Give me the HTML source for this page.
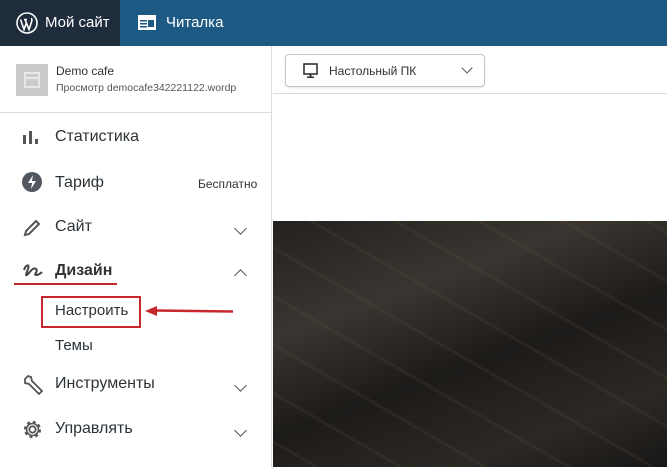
<!DOCTYPE html><html><head><meta charset="utf-8"><style>
*{margin:0;padding:0;box-sizing:border-box}
body{width:667px;height:467px;overflow:hidden;background:#fff;font-family:"Liberation Sans","DejaVu Sans",sans-serif;position:relative;color:#2c3338}
.top{position:absolute;left:0;top:0;width:667px;height:46px;background:#1d5a83}
.my{position:absolute;left:0;top:0;width:120px;height:46px;background:#1f2c3b;color:#fff;font-size:15px}
.t{position:absolute;color:#fff;font-size:15px;top:14px}
.side{position:absolute;left:0;top:46px;width:272px;height:421px;border-right:1px solid #dcdcde}
.item{position:absolute;left:55px;font-size:16px;color:#2c3338}
.ic{position:absolute;left:22px}
.chev{position:absolute;left:236px;width:9px;height:9px;border-right:1.6px solid #555;border-bottom:1.6px solid #555;transform:rotate(45deg)}
.wood{position:absolute;left:273px;top:221px;width:394px;height:246px;background:
repeating-linear-gradient(30deg,rgba(0,0,0,0) 0 20px,rgba(110,95,80,.14) 21px 23px,rgba(0,0,0,0) 24px 42px),
linear-gradient(160deg,#24211e 0%,#3a3530 30%,#1d1b19 55%,#2c2824 80%,#181716 100%)}
</style></head><body>
<div class="top"></div>
<div class="my"><svg style="position:absolute;left:16px;top:12px" width="22" height="22" viewBox="0 0 22 22"><circle cx="11" cy="11" r="10" fill="none" stroke="#fff" stroke-width="1.6"/><path d="M4.5 7.5l3.5 10 2.5-7M9 7.5l4 10 2.5-7.5c.8-2.5.3-3.5-.5-3.5M8 7.5h3" fill="none" stroke="#fff" stroke-width="1.6"/></svg><span class="t" style="left:45px">Мой сайт</span></div>
<svg style="position:absolute;left:138px;top:15px" width="18" height="15"><rect width="18" height="15" fill="#fff"/><rect x="2" y="5" width="7" height="1.5" fill="#1d5a83"/><rect x="2" y="8" width="7" height="1.5" fill="#1d5a83"/><rect x="2" y="11" width="7" height="1.5" fill="#1d5a83"/><rect x="10" y="5" width="6" height="7" fill="#1d5a83"/></svg>
<span class="t" style="left:166px">Читалка</span>
<div class="side">
<div style="position:absolute;left:16px;top:18px;width:32px;height:32px;background:#c9cbcd"><div style="position:absolute;left:8px;top:8px;width:16px;height:16px;border:2px solid #e6e7e8"></div><div style="position:absolute;left:8px;top:13px;width:16px;height:2px;background:#e6e7e8"></div></div>
<div style="position:absolute;left:56px;top:18px;font-size:12px">Demo cafe</div>
<div style="position:absolute;left:56px;top:36px;font-size:10.5px;color:#50575e;white-space:nowrap;width:190px;overflow:hidden">Просмотр democafe342221122.wordp</div>
<div style="position:absolute;left:0;top:66px;width:271px;height:1px;background:#dcdcde"></div>
</div>
<div style="position:absolute;left:0;top:0">
<svg class="ic" style="top:129px" width="16" height="16"><rect x="1" y="6" width="3" height="9" fill="#555"/><rect x="7" y="2" width="3" height="13" fill="#555"/><rect x="13" y="10" width="3" height="5" fill="#555"/></svg>
<span class="item" style="top:128px">Статистика</span>
<svg class="ic" style="top:172px" width="20" height="20"><circle cx="10" cy="10" r="10" fill="#50575e"/><path d="M11 3L6 11h4l-1 6 5-8h-4z" fill="#fff"/></svg>
<span class="item" style="top:174px">Тариф</span>
<span style="position:absolute;left:198px;top:177px;font-size:12px">Бесплатно</span>
<svg class="ic" style="top:218px" width="20" height="20"><path d="M3 17l1-4L14 3l3 3L7 16z" fill="none" stroke="#555" stroke-width="2"/></svg>
<span class="item" style="top:218px">Сайт</span><div class="chev" style="top:224px"></div>
<svg class="ic" style="top:261px" width="22" height="18"><path d="M2 9c2-6 6-6 4-1s-3 8 0 5 5-7 8-5-3 6 0 6 5-2 6-3" fill="none" stroke="#444" stroke-width="2"/></svg>
<span class="item" style="top:262px;font-weight:bold;color:#333">Дизайн</span>
<div class="chev" style="top:271px;transform:rotate(225deg)"></div>
<div style="position:absolute;left:14px;top:283px;width:103px;height:2px;background:#c0282d"></div>
<div style="position:absolute;left:41px;top:296px;width:100px;height:32px;border:2.5px solid #c8282d"></div>
<span class="item" style="top:302px;font-size:15px">Настроить</span>
<svg style="position:absolute;left:143px;top:305px" width="92" height="12"><path d="M90 6.5L12 5.5" stroke="#c8282d" stroke-width="2.5"/><path d="M2 6L14 1v10z" fill="#c8282d"/></svg>
<span class="item" style="top:337px;font-size:15px">Темы</span>
<svg class="ic" style="top:374px" width="22" height="22"><path d="M3 5l3-3 3 1 1 4 10 10-3 3L7 10 3 9z" fill="none" stroke="#555" stroke-width="1.8"/></svg>
<span class="item" style="top:375px">Инструменты</span><div class="chev" style="top:381px"></div>
<svg class="ic" style="top:419px" width="21" height="21" viewBox="0 0 21 21"><circle cx="10.5" cy="10.5" r="3.2" fill="none" stroke="#555" stroke-width="1.8"/><circle cx="10.5" cy="10.5" r="7.5" fill="none" stroke="#555" stroke-width="2.2" stroke-dasharray="3 2.9"/><circle cx="10.5" cy="10.5" r="6" fill="none" stroke="#555" stroke-width="1.6"/></svg>
<span class="item" style="top:420px">Управлять</span><div class="chev" style="top:426px"></div>
</div>
<div style="position:absolute;left:273px;top:93px;width:394px;height:1px;background:#dcdcde"></div>
<div style="position:absolute;left:285px;top:54px;width:200px;height:33px;border:1px solid #c3c4c7;border-radius:4px;box-shadow:0 1px 2px rgba(0,0,0,.1)">
<svg style="position:absolute;left:17px;top:8px" width="16" height="16"><rect x="1" y="1" width="13" height="10" fill="none" stroke="#333" stroke-width="1.6"/><rect x="6.5" y="11" width="2" height="3" fill="#333"/><rect x="4" y="13.5" width="7" height="1.5" fill="#333"/></svg>
<span style="position:absolute;left:43px;top:9px;font-size:12px">Настольный ПК</span>
<div style="position:absolute;left:177px;top:9px;width:8px;height:8px;border-right:1.5px solid #555;border-bottom:1.5px solid #555;transform:rotate(45deg)"></div>
</div>
<div class="wood"></div>
</body></html>
